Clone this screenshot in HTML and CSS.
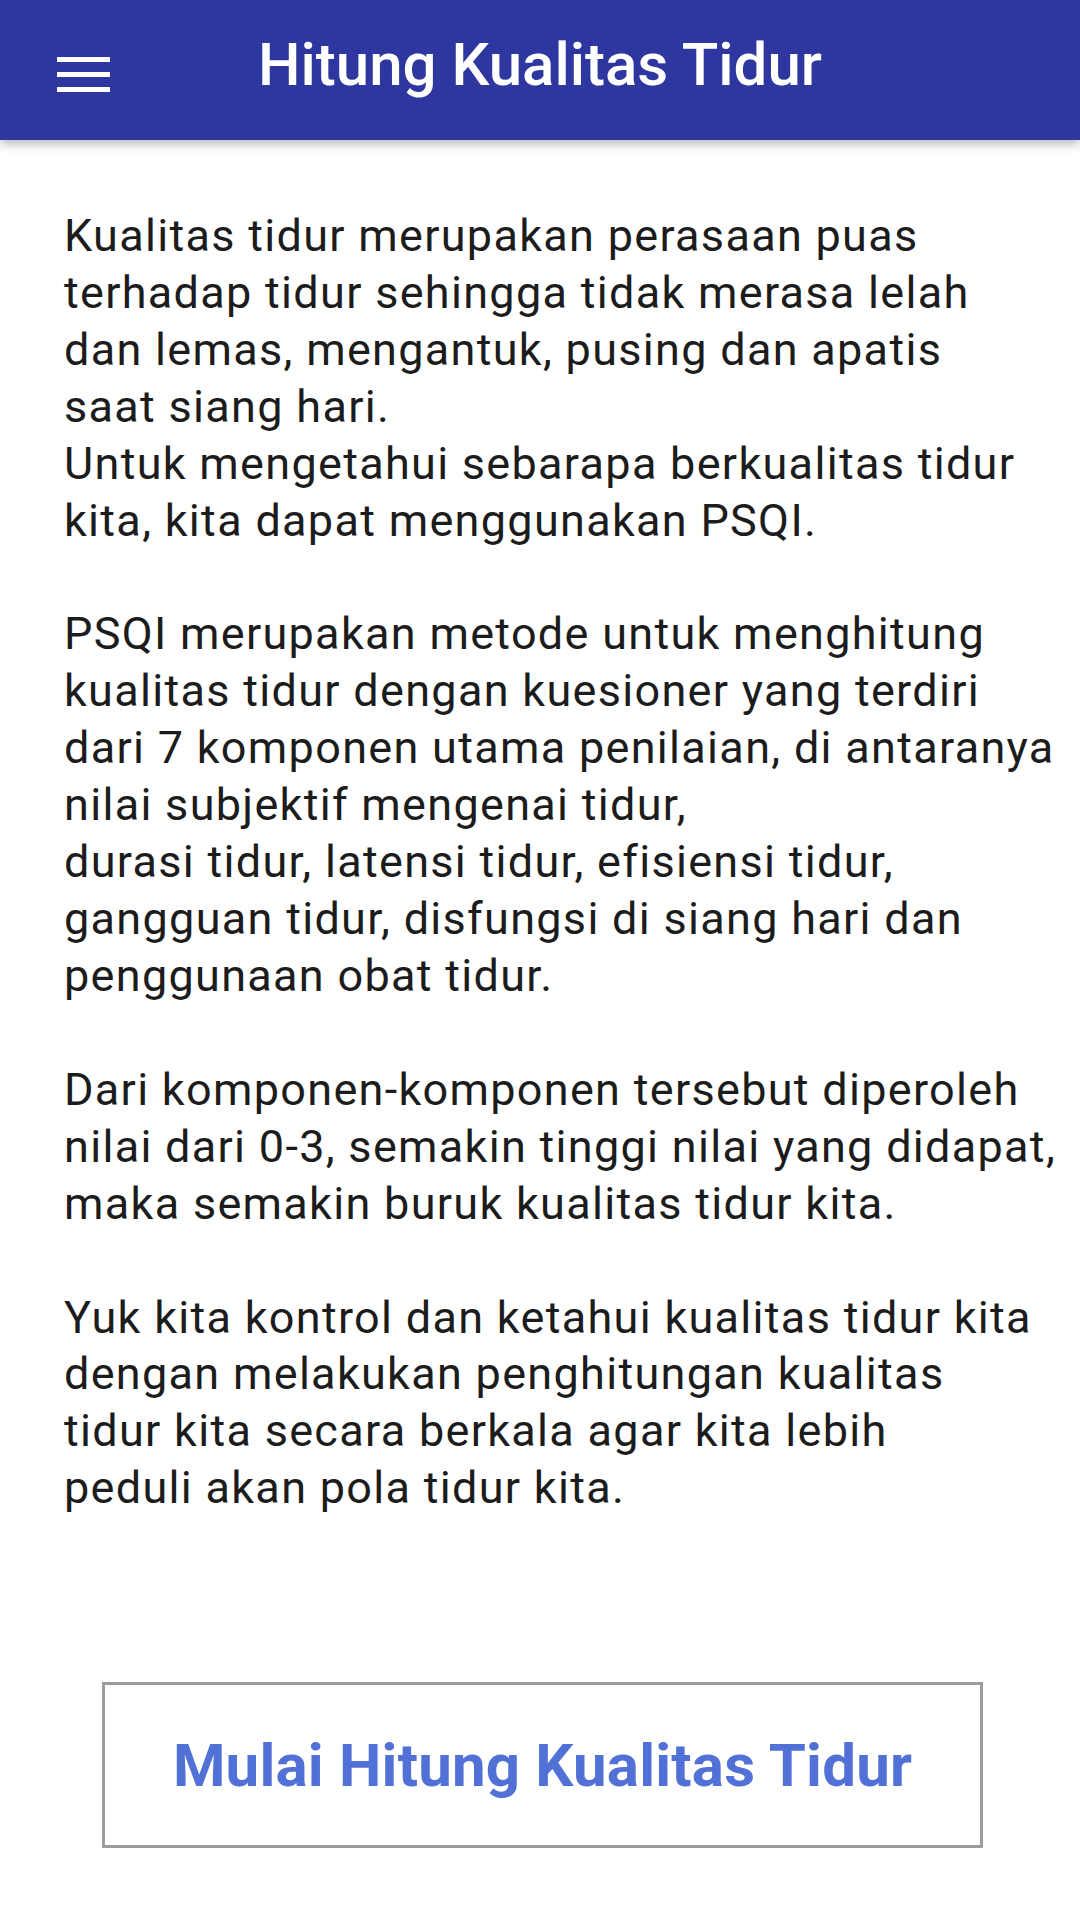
FILE: index.html
```html
<!DOCTYPE html>
<html>
<head>
<meta charset="utf-8">
<link rel="stylesheet" href="styles.css">
</head>
<body>
<header class="appbar">
  <div class="menu" aria-label="menu">
    <span class="bar"></span><span class="bar"></span><span class="bar"></span>
  </div>
  <h1 class="title">Hitung Kualitas Tidur</h1>
</header>
<main class="content">
  <p class="para">Kualitas tidur merupakan perasaan puas<br>terhadap tidur sehingga tidak merasa lelah<br>dan lemas, mengantuk, pusing dan apatis<br>saat siang hari.<br>Untuk mengetahui sebarapa berkualitas tidur<br>kita, kita dapat menggunakan PSQI.</p>
  <p class="para">PSQI merupakan metode untuk menghitung<br>kualitas tidur dengan kuesioner yang terdiri<br>dari 7 komponen utama penilaian, di antaranya<br>nilai subjektif mengenai tidur,<br>durasi tidur, latensi tidur, efisiensi tidur,<br>gangguan tidur, disfungsi di siang hari dan<br>penggunaan obat tidur.</p>
  <p class="para">Dari komponen-komponen tersebut diperoleh<br>nilai dari 0-3, semakin tinggi nilai yang didapat,<br>maka semakin buruk kualitas tidur kita.</p>
  <p class="para">Yuk kita kontrol dan ketahui kualitas tidur kita<br>dengan melakukan penghitungan kualitas<br>tidur kita secara berkala agar kita lebih<br>peduli akan pola tidur kita.</p>
  <div class="actions">
    <button class="start">Mulai Hitung Kualitas Tidur</button>
  </div>
</main>
</body>
</html>
```

FILE: styles.css
```css
html, body {
  margin: 0;
  padding: 0;
  background: #ffffff;
  font-family: Roboto, "Noto Sans", sans-serif;
}

.appbar {
  height: 140px;
  background: #2e37a0;
  display: flex;
  align-items: center;
  position: relative;
  box-shadow: 0 4px 10px rgba(0, 0, 0, 0.28);
}

.menu {
  position: absolute;
  left: 57px;
  top: 57px;
  width: 53px;
  display: flex;
  flex-direction: column;
  gap: 10px;
}

.bar {
  display: block;
  height: 5px;
  background: #ffffff;
}

.title {
  margin: 0 auto;
  color: #ffffff;
  font-size: 60px;
  font-weight: 500;
  line-height: 1;
  position: relative;
  top: -5px;
}

.content {
  padding: 68px 0 0 64px;
}

.para {
  margin: 0 0 57px 0;
  font-size: 45px;
  letter-spacing: 1.3px;
  line-height: 56.9px;
  color: #1c1c1c;
  white-space: nowrap;
}

.para:last-of-type {
  margin-bottom: 0;
}

.actions {
  padding: 165px 0 0 38px;
}

.start {
  width: 881px;
  height: 166px;
  background: #ffffff;
  border: 3px solid #9a9c9f;
  color: #5271d6;
  font-family: Roboto, "Noto Sans", sans-serif;
  font-size: 60px;
  letter-spacing: 0.2px;
  font-weight: 700;
  padding: 0;
}
```
